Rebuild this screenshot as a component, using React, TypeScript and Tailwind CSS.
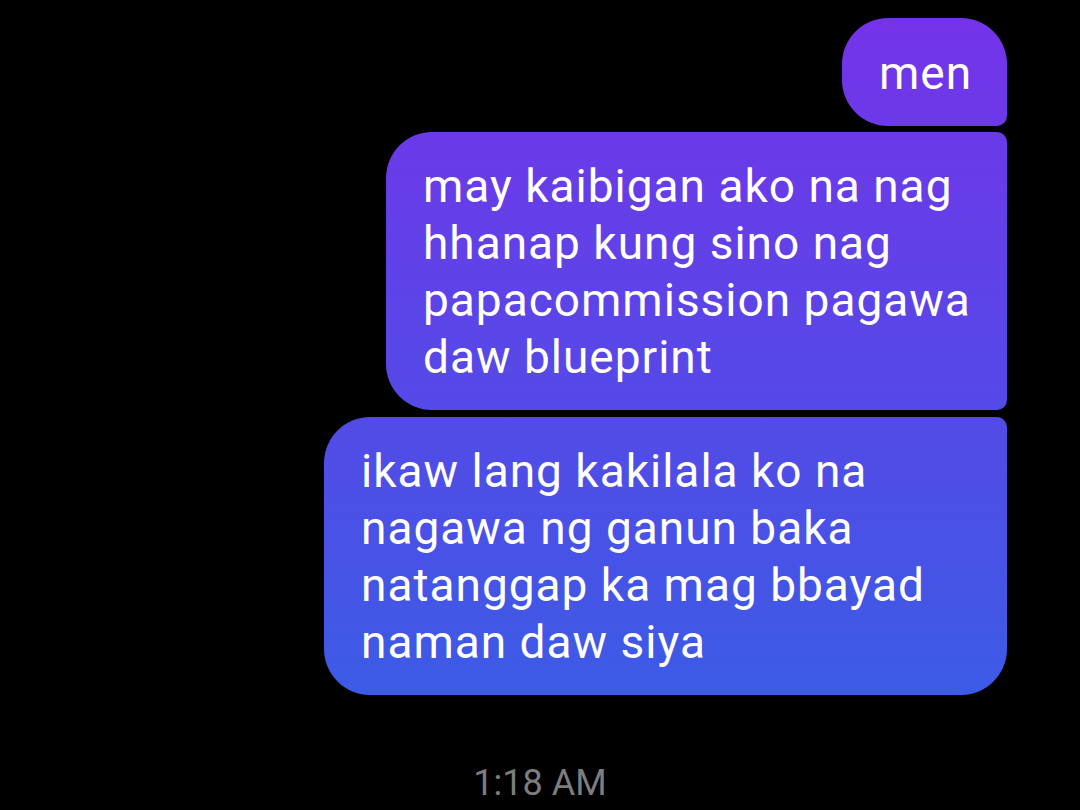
const bubbleBg =
  'bg-[linear-gradient(180deg,#7632e9_0px,#3262e5_810px)] bg-fixed text-white';

export default function App() {
  return (
    <div className="w-[1080px] h-[810px] bg-black overflow-hidden font-['Roboto',sans-serif]">
      <div className="flex flex-col items-end pr-[73px] pt-[18px] gap-[6px]">
        <div className={`${bubbleBg} w-[165px] pl-[37px] pt-[27px] pb-[24px] rounded-[46px] rounded-br-[10px] text-[46px] leading-[57px] tracking-[1px]`}>
          men
        </div>
        <div className={`${bubbleBg} w-[621px] pl-[37px] pt-[26px] pb-[24px] rounded-l-[46px] rounded-r-[10px] text-[46px] leading-[57px] tracking-[1px]`}>
          may kaibigan ako na nag
          <br />
          hhanap kung sino nag
          <br />
          papacommission pagawa
          <br />
          daw blueprint
        </div>
        <div className={`${bubbleBg} w-[683px] mt-[1px] pl-[37px] pt-[26px] pb-[24px] rounded-[46px] rounded-tr-[10px] text-[46px] leading-[57px] tracking-[1px]`}>
          ikaw lang kakilala ko na
          <br />
          nagawa ng ganun baka
          <br />
          natanggap ka mag bbayad
          <br />
          naman daw siya
        </div>
      </div>
      <div className="mt-[68px] text-center text-[36px] leading-[41px] text-[#7d7d7d]">1:18 AM</div>
    </div>
  );
}
